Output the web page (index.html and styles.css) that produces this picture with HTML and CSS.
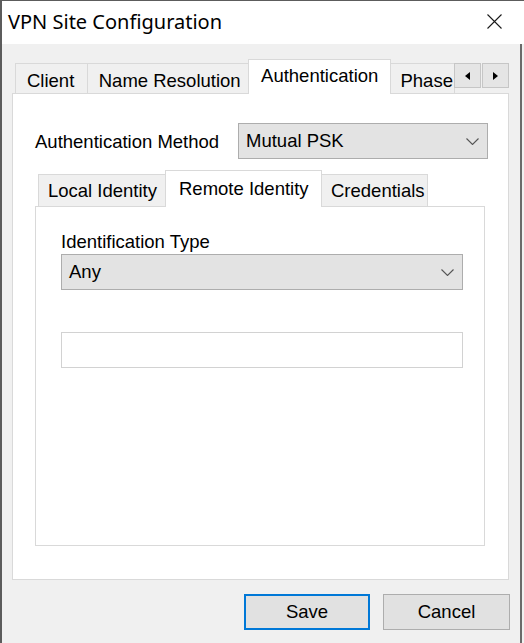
FILE: index.html
```html
<!DOCTYPE html>
<html lang="en">
<head>
    <meta charset="UTF-8">
    <meta name="viewport" content="width=device-width, initial-scale=1.0">
    <title>VPN Site Configuration</title>
    <link rel="stylesheet" href="styles.css">
</head>
<body>

    <div class="window">
        <!-- Title bar -->
        <div class="titlebar">
            <span class="title">VPN Site Configuration</span>
            <span class="close">
                <svg width="15" height="15" viewBox="0 0 15 15">
                    <path d="M0.5 0.5 L14.5 14.5 M14.5 0.5 L0.5 14.5" stroke="#1a1a1a" stroke-width="1.1" fill="none"/>
                </svg>
            </span>
        </div>

        <div class="dialog-body">
            <!-- Outer tabs -->
            <div class="tabs outer-tabs">
                <div class="tab tab-client">Client</div>
                <div class="tab tab-names">Name Resolution</div>
                <div class="tab tab-auth selected">Authentication</div>
                <div class="tab tab-phase">Phase</div>
                <div class="scroll-btn">
                    <svg width="5" height="8" viewBox="0 0 5 8"><path d="M5 0 L0 4 L5 8 Z" fill="#000"/></svg>
                </div>
                <div class="scroll-btn">
                    <svg width="5" height="8" viewBox="0 0 5 8"><path d="M0 0 L5 4 L0 8 Z" fill="#000"/></svg>
                </div>
            </div>

            <div class="panel outer-panel">
                <div class="field-row">
                    <span class="field-label">Authentication Method</span>
                    <div class="combo combo-method">
                        <span>Mutual PSK</span>
                        <svg width="13" height="7" viewBox="0 0 13 7"><path d="M0.5 0.5 L6.5 6.5 L12.5 0.5" stroke="#555" stroke-width="1.1" fill="none"/></svg>
                    </div>
                </div>

                <!-- Inner tabs -->
                <div class="tabs inner-tabs">
                    <div class="tab tab-local">Local Identity</div>
                    <div class="tab tab-remote selected">Remote Identity</div>
                    <div class="tab tab-creds">Credentials</div>
                </div>

                <div class="panel inner-panel">
                    <div class="stack-label">Identification Type</div>
                    <div class="combo combo-type">
                        <span>Any</span>
                        <svg width="13" height="7" viewBox="0 0 13 7"><path d="M0.5 0.5 L6.5 6.5 L12.5 0.5" stroke="#555" stroke-width="1.1" fill="none"/></svg>
                    </div>
                    <input type="text" class="text-input">
                </div>
            </div>

            <!-- Dialog buttons -->
            <div class="actions">
                <button class="btn btn-default">Save</button>
                <button class="btn">Cancel</button>
            </div>
        </div>
    </div>

</body>
</html>
```

FILE: styles.css
```css
body {
    margin: 0;
    background-color: #f0f0f0;
    font-family: "Liberation Sans", Arial, sans-serif;
    font-size: 18.5px;
    color: #000;
}

.window {
    width: 524px;
    height: 643px;
    box-sizing: border-box;
    border-top: 1px solid #5c5c5c;
    border-left: 2px solid #5c5c5c;
    background-color: #f0f0f0;
    overflow: hidden;
}

/* Title bar */
.titlebar {
    height: 43px;
    background-color: #fff;
    display: flex;
    align-items: center;
    justify-content: space-between;
    padding-left: 6px;
    padding-right: 22px;
}

.title {
    font-family: "Noto Sans", sans-serif;
    font-size: 20px;
    padding-bottom: 2px;
}

.close {
    display: flex;
    padding-bottom: 2px;
}

/* Body */
.dialog-body {
    padding: 15px 10px 0 10px;
    border-right: 2px solid #6a6a6a;
    height: 600px;
    box-sizing: border-box;
    margin-right: 2px;
}

/* Tabs */
.tabs {
    display: flex;
    align-items: flex-end;
}

.tab {
    box-sizing: border-box;
    border: 1px solid #d9d9d9;
    border-bottom: none;
    background-color: #f0f0f0;
    margin-right: -1px;
    line-height: 20px;
    padding-left: 11px;
    white-space: nowrap;
}

.tab.selected {
    background-color: #fff;
    position: relative;
    z-index: 1;
    margin-bottom: -1px;
    margin-left: -1px;
}

.outer-tabs {
    margin-left: 3px;
    height: 34px;
}

.outer-tabs .tab {
    height: 30px;
    padding-top: 7px;
}

.outer-tabs .tab.selected {
    height: 35px;
    padding-top: 6px;
    padding-left: 12px;
}

.tab-client { width: 73px; }
.tab-names { width: 164px; }
.tab-auth { width: 144px; }
.tab-phase { width: 65px; padding-left: 9px; }

.scroll-btn {
    align-self: flex-start;
    margin-top: 4px;
    width: 27px;
    height: 25px;
    box-sizing: border-box;
    background-color: #e5e5e5;
    border: 1px solid #c6c6c6;
    display: flex;
    align-items: center;
    justify-content: center;
    margin-right: 1px;
}

/* Panels */
.panel {
    box-sizing: border-box;
    background-color: #fff;
    border: 1px solid #d9d9d9;
}

.outer-panel {
    width: 497px;
    height: 487px;
    padding: 29px 20px 0 22px;
}

.field-row {
    display: flex;
    align-items: center;
}

.field-label {
    width: 203px;
    padding-top: 2px;
}

.combo {
    box-sizing: border-box;
    height: 36px;
    background-color: #e3e3e3;
    border: 1px solid #adadad;
    display: flex;
    align-items: center;
    justify-content: space-between;
    padding: 0 8px 0 7px;
}

.combo svg {
    margin-top: 1px;
}

.combo-method {
    width: 250px;
}

.inner-tabs {
    margin-left: 3px;
    margin-top: 11px;
    height: 36px;
}

.inner-tabs .tab {
    height: 32px;
    padding-top: 6px;
    padding-left: 9px;
}

.inner-tabs .tab.selected {
    height: 37px;
    padding-top: 8px;
    padding-left: 13px;
}

.tab-local { width: 129px; }
.tab-remote { width: 157px; }
.tab-creds { width: 107px; }

.inner-panel {
    width: 450px;
    height: 340px;
    padding: 25px 0 0 25px;
}

.stack-label {
    line-height: 20px;
}

.combo-type {
    width: 402px;
    margin-top: 2px;
}

.text-input {
    display: block;
    box-sizing: border-box;
    width: 402px;
    height: 36px;
    margin: 42px 0 0 0;
    border: 1px solid #d2d2d2;
    background-color: #fff;
    outline: none;
}

/* Buttons */
.actions {
    display: flex;
    justify-content: flex-end;
    gap: 13px;
    margin-top: 14px;
}

.btn {
    box-sizing: border-box;
    width: 127px;
    height: 36px;
    background-color: #e1e1e1;
    border: 1px solid #adadad;
    font-family: "Liberation Sans", Arial, sans-serif;
    font-size: 18.5px;
    color: #000;
    padding: 0;
}

.btn-default {
    width: 126px;
    border: 2px solid #0078d7;
}
```
